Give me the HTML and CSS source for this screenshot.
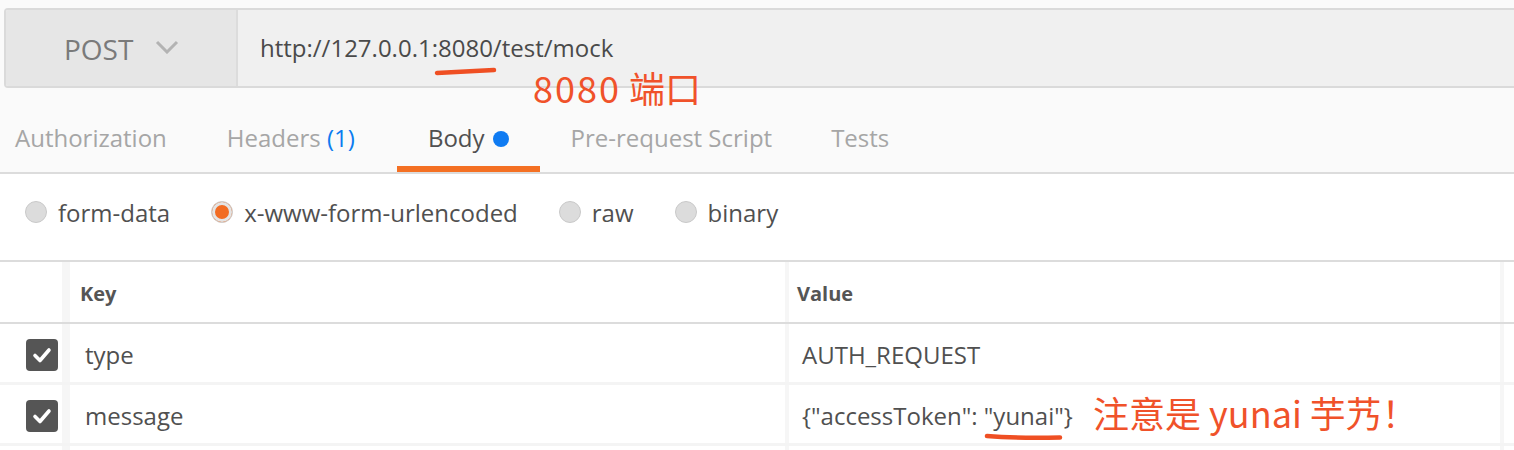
FILE: index.html
```html
<!DOCTYPE html>
<html>
<head>
<meta charset="utf-8">
<link rel="stylesheet" href="styles.css">
</head>
<body>
<div class="page">
  <div class="urlbar">
    <div class="method">
      <span class="method-name">POST</span>
      <svg class="chevron" width="24" height="14" viewBox="0 0 24 14"><polyline points="2,2 12,12 22,2" fill="none" stroke="#b3b3b3" stroke-width="3"/></svg>
    </div>
    <div class="url">http://127.0.0.1:8080/test/mock</div>
  </div>

  <nav class="tabs">
    <div class="tab">Authorization</div>
    <div class="tab tab-headers">Headers <span class="count">(1)</span></div>
    <div class="tab active">Body<span class="dot"></span></div>
    <div class="tab tab-pre">Pre-request Script</div>
    <div class="tab">Tests</div>
  </nav>

  <div class="bodytypes">
    <label class="opt"><span class="radio"></span>form-data</label>
    <label class="opt"><span class="radio on"></span>x-www-form-urlencoded</label>
    <label class="opt"><span class="radio"></span>raw</label>
    <label class="opt"><span class="radio"></span>binary</label>
  </div>

  <div class="kv">
    <div class="kv-row head">
      <div class="c-check"></div>
      <div class="c-key">Key</div>
      <div class="c-val">Value</div>
      <div class="c-end"></div>
    </div>
    <div class="kv-row">
      <div class="c-check"><span class="cb"><svg width="32" height="32" viewBox="0 0 32 32"><polyline points="9,16.5 14,21.5 23,11" fill="none" stroke="#fff" stroke-width="3.6" stroke-linecap="round" stroke-linejoin="round"/></svg></span></div>
      <div class="c-key">type</div>
      <div class="c-val">AUTH_REQUEST</div>
      <div class="c-end"></div>
    </div>
    <div class="kv-row">
      <div class="c-check"><span class="cb"><svg width="32" height="32" viewBox="0 0 32 32"><polyline points="9,16.5 14,21.5 23,11" fill="none" stroke="#fff" stroke-width="3.6" stroke-linecap="round" stroke-linejoin="round"/></svg></span></div>
      <div class="c-key">message</div>
      <div class="c-val">{"accessToken": "yunai"}</div>
      <div class="c-end"></div>
    </div>
    <div class="kv-row">
      <div class="c-check"></div>
      <div class="c-key"></div>
      <div class="c-val"></div>
      <div class="c-end"></div>
    </div>
  </div>

  <div class="note note-port"><span class="digits">8080</span> 端口</div>
  <div class="note note-token">注意是 yunai 芋艿！</div>
  <svg class="marks" width="1514" height="450" viewBox="0 0 1514 450">
    <path d="M437 73 C455 72 475 71 494 70" fill="none" stroke="#ef4f23" stroke-width="4.5" stroke-linecap="round"/>
    <path d="M987 436 C1010 438 1035 438 1060 437.5" fill="none" stroke="#ef4f23" stroke-width="4.5" stroke-linecap="round"/>
  </svg>
</div>
</body>
</html>
```

FILE: styles.css
```css
* { box-sizing: border-box; }
html, body { margin: 0; padding: 0; }
body {
  background: #fafafa;
  font-family: "Open Sans", "Noto Sans", sans-serif;
  color: #505050;
  overflow: hidden;
  width: 1514px;
  height: 450px;
}
.page { position: relative; width: 1514px; height: 450px; overflow: hidden; }

/* URL bar */
.urlbar {
  display: flex;
  height: 80px;
  margin: 8px -20px 0 4px;
  border: 2px solid #dadada;
  border-radius: 4px;
  overflow: hidden;
}
.method {
  width: 232px;
  flex: none;
  display: flex;
  align-items: center;
  padding-left: 58px;
  background: #e6e6e6;
  border-right: 2px solid #dcdcdc;
}
.method-name {
  font-size: 28px;
  line-height: 38px;
  color: #7a7a7a;
  padding-top: 2px;
}
.chevron { margin-left: 22px; margin-top: -3px; }
.url {
  flex: 1;
  display: flex;
  align-items: center;
  padding-left: 22px;
  background: #f0f0f0;
  font-size: 24px;
  line-height: 33px;
  color: #4a4a4a;
  padding-bottom: 2px;
}

/* Tabs */
.tabs {
  display: flex;
  margin-left: -16px;
  border-bottom: 2px solid #dcdcdc;
}
.tab {
  padding: 33px 31px 12px;
  font-size: 24px;
  line-height: 33px;
  color: #a6a6a6;
  border-bottom: 6px solid transparent;
  display: flex;
  align-items: center;
  white-space: pre;
}
.tab-headers { margin-left: -2px; margin-right: 11px; }
.tab-pre { margin-right: -3px; }
.tab.active {
  color: #505050;
  border-bottom-color: #f47023;
}
.count { color: #0c7cf0; }
.dot {
  width: 16px;
  height: 16px;
  border-radius: 50%;
  background: #0f7bf2;
  margin-left: 8px;
  margin-top: 2px;
}

/* Body types */
.bodytypes {
  display: flex;
  background: #fff;
  height: 86px;
  padding: 22px 0 0 25px;
}
.opt {
  display: flex;
  align-items: center;
  height: 33px;
  font-size: 24px;
  line-height: 33px;
  color: #505050;
  margin-right: 41px;
}
.radio {
  width: 22px;
  height: 22px;
  border-radius: 50%;
  background: #dcdcdc;
  border: 1px solid #c9c9c9;
  margin-right: 11px;
  margin-top: -2px;
  flex: none;
}
.radio.on {
  background: #f26b21;
  border: 1px solid #cfcfcf;
  box-shadow: inset 0 0 0 3px #e4e4e4;
}

/* Key/value table */
.kv {
  background: #fff;
  border-top: 2px solid #dcdcdc;
}
.kv-row {
  display: flex;
  height: 61px;
  border-bottom: 3px solid #f4f4f4;
  font-size: 24px;
  color: #505050;
}
.kv-row.head {
  height: 62px;
  border-bottom: 2px solid #dcdcdc;
  font-size: 20px;
  font-weight: 700;
  color: #555;
}
.c-check {
  width: 62px;
  flex: none;
  display: flex;
  align-items: center;
  padding-left: 26px;
}
.c-key {
  width: 723px;
  flex: none;
  border-left: 8px solid #f6f6f6;
  display: flex;
  align-items: center;
  padding-left: 15px;
}
.c-val {
  width: 715px;
  flex: none;
  border-left: 4px solid #f6f6f6;
  display: flex;
  align-items: center;
  padding-left: 13px;
}
.c-end {
  flex: 1;
  border-left: 4px solid #f6f6f6;
}
.head .c-key { padding-left: 10px; padding-top: 2px; }
.head .c-val { padding-left: 8px; padding-top: 2px; }
.kv-row:not(.head) .c-key, .kv-row:not(.head) .c-val { padding-top: 2px; }
.cb {
  width: 32px;
  height: 32px;
  border-radius: 4px;
  background: #555;
  display: block;
  margin-top: 3px;
}
.cb svg { display: block; }

/* annotations (overlay) */
.note {
  position: absolute;
  font-family: "Noto Sans CJK SC", "Noto Sans", sans-serif;
  font-size: 36px;
  line-height: 36px;
  color: #f0522a;
  white-space: pre;
}
.digits { letter-spacing: 2px; }
.note-port { left: 533px; top: 69px; }
.note-token { left: 1093px; top: 394px; }
.marks { position: absolute; left: 0; top: 0; pointer-events: none; }
```
